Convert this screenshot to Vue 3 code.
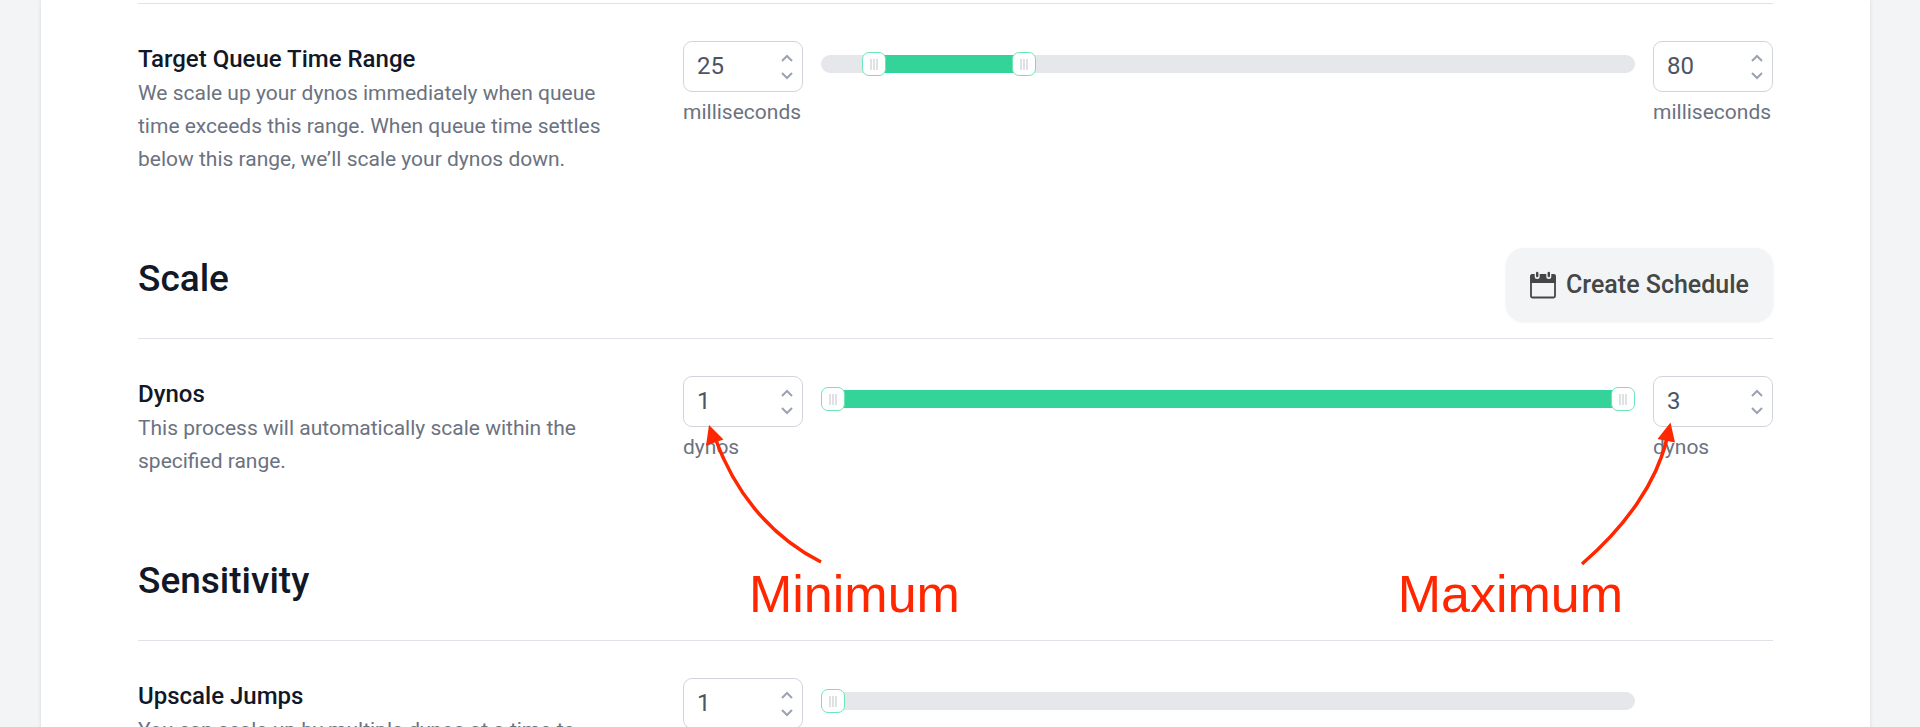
<script setup>
import { reactive } from 'vue'

const sections = reactive([
  {
    id: 'queue',
    title: '',
    setting: 'Target Queue Time Range',
    help: 'We scale up your dynos immediately when queue time exceeds this range. When queue time settles below this range, we’ll scale your dynos down.',
    unit: 'milliseconds',
    min: 10,
    max: 300,
    values: [25, 80],
  },
  {
    id: 'dynos',
    title: 'Scale',
    action: 'Create Schedule',
    setting: 'Dynos',
    help: 'This process will automatically scale within the specified range.',
    unit: 'dynos',
    min: 1,
    max: 3,
    values: [1, 3],
    annotated: true,
  },
  {
    id: 'jumps',
    title: 'Sensitivity',
    setting: 'Upscale Jumps',
    help: 'You can scale up by multiple dynos at a time to',
    unit: '',
    min: 1,
    max: 10,
    values: [1],
  },
])

const bounds = ['minimum', 'maximum']

function step(section, index, delta) {
  const next = section.values[index] + delta
  section.values[index] = Math.min(section.max, Math.max(section.min, next))
}

function fillStyle(section) {
  const share = (v) => ((v - section.min) / (section.max - section.min)) * 100
  const [low, high] = section.values
  return { left: share(low) + '%', width: share(high) - share(low) + '%' }
}
</script>

<template>
  <div class="page">
    <main class="card">
      <section v-for="s in sections" :key="s.id" class="section">
        <header v-if="s.title" class="section-head">
          <h2>{{ s.title }}</h2>
          <button v-if="s.action" type="button" class="action">
            <svg class="calendar" viewBox="0 0 26 28" aria-hidden="true">
              <rect x="1" y="4" width="24" height="22.5" rx="1.5" fill="none" stroke="#444746" stroke-width="1.8" />
              <path d="M0.2 12V5.2a2 2 0 0 1 2-2h21.6a2 2 0 0 1 2 2V12z" fill="#444746" />
              <path d="M7.2 2.5v3M18.8 2.5v3" stroke="#f3f4f6" stroke-width="5" stroke-linecap="round" />
              <path d="M7.2 2v3M18.8 2v3" stroke="#444746" stroke-width="2.4" stroke-linecap="round" />
            </svg>
            {{ s.action }}
          </button>
        </header>
        <div class="row">
          <div class="about">
            <h3>{{ s.setting }}</h3>
            <p>{{ s.help }}</p>
          </div>
          <div class="controls">
            <div
              v-for="(value, i) in s.values"
              :key="i"
              class="field"
              :class="bounds[i]"
            >
              <div class="number">
                <input
                  :id="s.id + '-' + i"
                  v-model.number="s.values[i]"
                  type="number"
                  :min="s.min"
                  :max="s.max"
                  :aria-label="s.setting + ' ' + bounds[i]"
                />
                <div class="steps">
                  <button type="button" aria-label="Increase" @click="step(s, i, 1)">
                    <svg viewBox="0 0 12 8"><path d="M1 7l5-5 5 5" /></svg>
                  </button>
                  <button type="button" aria-label="Decrease" @click="step(s, i, -1)">
                    <svg viewBox="0 0 12 8"><path d="M1 1l5 5 5-5" /></svg>
                  </button>
                </div>
              </div>
              <label v-if="s.unit" :for="s.id + '-' + i">{{ s.unit }}</label>
            </div>
            <div class="slider">
              <div v-if="s.values.length > 1" class="travel">
                <div class="fill" :style="fillStyle(s)"></div>
              </div>
              <input
                v-for="(value, i) in s.values"
                :key="i"
                v-model.number="s.values[i]"
                type="range"
                :min="s.min"
                :max="s.max"
                :aria-label="s.setting + ' ' + bounds[i] + ' slider'"
              />
            </div>
            <template v-if="s.annotated">
              <div class="note note-min">
                <svg viewBox="0 0 140 188" aria-hidden="true">
                  <path class="shaft" d="M33 64C50 111 83 158 138 186" />
                  <path class="head" d="M26 49L40.500 63.500L23 69.500Z" />
                </svg>
                <span>Minimum</span>
              </div>
              <div class="note note-max">
                <svg viewBox="0 0 100 188" aria-hidden="true">
                  <path class="shaft" d="M84 62C74 106 43 150 -1 188" />
                  <path class="head" d="M87.500 46.500L74.500 63L92 66.500Z" />
                </svg>
                <span>Maximum</span>
              </div>
            </template>
          </div>
        </div>
      </section>
    </main>
  </div>
</template>

<style>
body {
  margin: 0;
  background: #f3f4f6;
}
</style>

<style scoped>
* {
  box-sizing: border-box;
}
.page {
  height: 100vh;
  overflow: hidden;
  padding: 0 50px 0 41px;
  background: #f3f4f6;
  color: #6b7280;
  font: 21px/33px Roboto, "Noto Sans", sans-serif;
}
.card {
  min-height: 100vh;
  padding: 3px 97px 0;
  background: #fff;
  box-shadow: 0 0 4px rgba(0, 0, 0, 0.12);
}
h2,
h3,
p {
  margin: 0;
}
.section-head {
  display: flex;
  justify-content: space-between;
  align-items: flex-start;
  min-height: 90px;
  padding-bottom: 17px;
}
h2 {
  padding-top: 10px;
  color: #111827;
  font-size: 37px;
  font-weight: 500;
  line-height: 42px;
}
.action {
  display: flex;
  align-items: center;
  gap: 10px;
  padding: 20px 24px;
  border: 0;
  border-radius: 18px;
  background: #f3f4f6;
  box-shadow: 0 1px 3px rgba(0, 0, 0, 0.08);
  color: #444746;
  font: 500 25px/33px Roboto, "Noto Sans", sans-serif;
}
.calendar {
  width: 26px;
  height: 28px;
}
.row {
  display: grid;
  grid-template-columns: 1fr 2fr;
  padding: 37px 0 72px;
  border-top: 1px solid #dfe2e7;
}
.about {
  padding-right: 64px;
}
h3 {
  color: #111827;
  font-size: 24px;
  font-weight: 500;
  line-height: 36px;
}
.controls {
  position: relative;
  display: grid;
  grid-template-columns: 120px 1fr 120px;
  column-gap: 18px;
  align-items: start;
}
.field {
  grid-row: 1;
}
.minimum {
  grid-column: 1;
}
.maximum {
  grid-column: 3;
}
.number {
  display: flex;
  height: 51px;
  margin-bottom: 4px;
  padding: 0 9px 0 13px;
  border: 1px solid #d1d5db;
  border-radius: 9px;
}
.number input {
  flex: 1;
  min-width: 0;
  padding: 0;
  border: 0;
  background: none;
  color: #4b5563;
  font: 24px/33px Roboto, "Noto Sans", sans-serif;
  appearance: textfield;
}
.number input::-webkit-inner-spin-button {
  appearance: none;
  margin: 0;
}
.steps {
  display: flex;
  flex-direction: column;
  justify-content: center;
  gap: 10px;
}
.steps button {
  display: block;
  padding: 0;
  border: 0;
  background: none;
}
.steps svg {
  display: block;
  width: 12px;
  height: 8px;
  fill: none;
  stroke: #9ca3af;
  stroke-width: 2;
}
.slider {
  position: relative;
  grid-row: 1;
  grid-column: 2;
  height: 18px;
  margin-top: 14px;
  border-radius: 9px;
  background: #e5e7eb;
}
.travel {
  position: absolute;
  inset: 0 12px;
}
.fill {
  position: absolute;
  top: 0;
  bottom: 0;
  background: #34d399;
}
.slider input {
  position: absolute;
  inset: -3px 0;
  width: 100%;
  height: 24px;
  margin: 0;
  background: none;
  appearance: none;
  pointer-events: none;
}
.slider input::-webkit-slider-thumb {
  width: 24px;
  height: 24px;
  border: 1px solid #6ee7b7;
  border-radius: 7px;
  background:
    repeating-linear-gradient(90deg, #dfe1e5 0 2px, #fff 2px 3px) center / 8px 11px no-repeat,
    #fff;
  appearance: none;
  pointer-events: auto;
}
.note {
  position: absolute;
  top: 0;
  color: #ff2600;
  font: 52px/60px "Liberation Sans", Arial, sans-serif;
  pointer-events: none;
}
.note svg {
  display: block;
  height: 188px;
  overflow: visible;
}
.note span {
  display: block;
}
.note-min {
  left: 0;
}
.note-min svg {
  width: 140px;
}
.note-min span {
  padding-left: 66px;
}
.note-max {
  right: 90px;
}
.note-max svg {
  width: 100px;
  margin-left: auto;
}
.note-max span {
  padding-right: 60px;
}
.shaft {
  fill: none;
  stroke: #ff2600;
  stroke-width: 3.500;
}
.head {
  fill: #ff2600;
}
</style>
